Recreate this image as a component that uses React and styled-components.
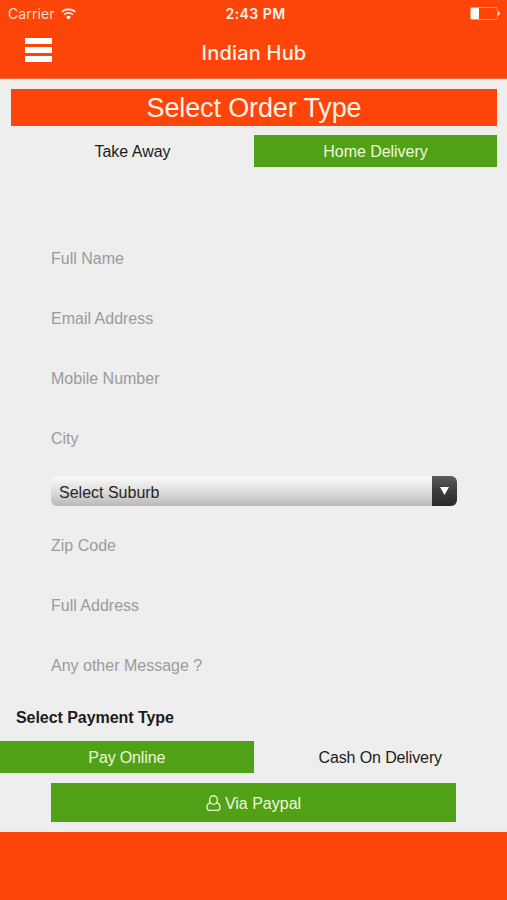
import React from 'react';
import styled, { createGlobalStyle } from 'styled-components';

const orange = '#fd4509';
const green = '#50a116';

const GlobalStyle = createGlobalStyle`
  * {
    box-sizing: border-box;
  }

  body {
    margin: 0;
    background: #eeeeee;
    font-family: "Liberation Sans", Arial, sans-serif;
    font-size: 16px;
    color: #1c1c1c;
  }
`;

const Screen = styled.div`
  display: flex;
  flex-direction: column;
  height: 900px;
  background: #eeeeee;
`;

const Header = styled.header`
  height: 79px;
  background: ${orange};
  border-bottom: 1px solid #fb6a3d;
  color: #fff1e8;
  font-family: Inter, "Liberation Sans", sans-serif;
`;

const StatusBar = styled.div`
  display: grid;
  grid-template-columns: 1fr auto 1fr;
  align-items: center;
  height: 27px;
  padding: 0 7px 0 8px;
  font-size: 14px;
`;

const Carrier = styled.div`
  display: flex;
  align-items: center;
  gap: 6px;
  letter-spacing: 0.1px;
  color: #ffd9c8;
`;

const Clock = styled.div`
  padding-left: 3px;
  font-weight: 600;
  letter-spacing: 0.45px;
`;

const Battery = styled.svg`
  justify-self: end;
`;

const NavBar = styled.div`
  display: grid;
  grid-template-columns: 1fr auto 1fr;
  align-items: center;
  height: 51px;
  padding: 0 24px 0 25px;
`;

const MenuButton = styled.button`
  display: flex;
  flex-direction: column;
  gap: 3px;
  width: 27px;
  margin-top: -5px;
  padding: 0;
  border: 0;
  background: none;
`;

const MenuLine = styled.span`
  height: 6px;
  background: #fff;
`;

const NavTitle = styled.h1`
  margin: 0;
  font-size: 20px;
  font-weight: 500;
  letter-spacing: 0.2px;
`;

const Banner = styled.h2`
  height: 37px;
  margin: 10px 10px 9px 11px;
  background: ${orange};
  color: #fff1e8;
  font-size: 27px;
  font-weight: 400;
  line-height: 39px;
  letter-spacing: -0.13px;
  text-align: center;
`;

const Options = styled.div`
  display: grid;
  grid-template-columns: 1fr 1fr;
  height: 32px;
  margin: ${props => props.margin};
`;

const Option = styled.button`
  padding: 2px 0 0;
  border: 0;
  background: ${props => (props.active ? green : 'transparent')};
  color: ${props => (props.active ? '#f0f8df' : '#1c1c1c')};
  font-family: inherit;
  font-size: 16px;
  letter-spacing: ${props => props.spacing || '0'};
`;

const Form = styled.form`
  display: flex;
  flex-direction: column;
  padding: 62px 50px 0 51px;
`;

const Field = styled.label`
  height: 60px;
  line-height: 60px;
  color: #9b9b9b;
`;

const Select = styled.div`
  display: flex;
  height: 30px;
  margin: 7px 0 10px;
  border-radius: 6px;
  overflow: hidden;
`;

const SelectValue = styled.div`
  flex: 1;
  padding-left: 8px;
  background: linear-gradient(#fbfbfb, #dedede 50%, #b9b9b9);
  color: #262626;
  line-height: 33px;
`;

const SelectArrow = styled.div`
  display: flex;
  align-items: center;
  justify-content: center;
  width: 25px;
  background: linear-gradient(#5c5c5c, #3c3c3c 50%, #282828);
`;

const PaymentTitle = styled.h3`
  height: 45px;
  margin: 0 0 0 16px;
  font-size: 16px;
  line-height: 43px;
  letter-spacing: -0.05px;
`;

const PaypalButton = styled.button`
  display: flex;
  align-items: center;
  justify-content: center;
  gap: 4px;
  height: 39px;
  margin: 0 51px 10px;
  padding: 2px 0 0;
  border: 0;
  background: ${green};
  color: #f0f8df;
  font-family: inherit;
  font-size: 16px;
`;

const Footer = styled.footer`
  flex: 1;
  background: ${orange};
`;

const WifiIcon = () => (
  <svg width="15" height="12" viewBox="0 0 15 12" fill="none">
    <path d="M0.8 3.9a9.6 9.6 0 0 1 13.4 0" stroke="#ffeadf" strokeWidth="1.9" />
    <path d="M3.2 6.6a6.2 6.2 0 0 1 8.6 0" stroke="#ffeadf" strokeWidth="1.8" />
    <path d="M7.5 11.5L5.1 8.9a3.4 3.4 0 0 1 4.8 0z" fill="#fff" />
  </svg>
);

const BatteryIcon = () => (
  <Battery width="30" height="13" viewBox="0 0 30 13">
    <rect x="0.5" y="0.5" width="27" height="12" rx="1.5" fill="none" stroke="#ff946e" />
    <rect x="1" y="1" width="8" height="11" rx="1" fill="#fff" />
    <path d="M28 4.5a2 2 0 0 1 0 4z" fill="#ffe5d8" />
  </Battery>
);

const PersonIcon = () => (
  <svg width="15" height="17" viewBox="0 0 15 17" fill="none" stroke="#e3f1cb" strokeWidth="1.4">
    <ellipse cx="7.5" cy="5.1" rx="3.9" ry="4.3" />
    <path d="M4.4 7.8C2 8.3 1 10.1 1 12.2c0 2.1 1.1 3.2 3 3.2h7c1.9 0 3-1.1 3-3.2 0-2.1-1-3.9-3.4-4.4" />
  </svg>
);

const contactFields = ['Full Name', 'Email Address', 'Mobile Number', 'City'];
const addressFields = ['Zip Code', 'Full Address', 'Any other Message ?'];

const Fields = props => props.items.map(item => (
  <Field key={item}>{item}</Field>
));

const App = () => (
  <Screen>
    <GlobalStyle />
    <Header>
      <StatusBar>
        <Carrier>
          <span>Carrier</span>
          <WifiIcon />
        </Carrier>
        <Clock>2:43 PM</Clock>
        <BatteryIcon />
      </StatusBar>
      <NavBar>
        <MenuButton aria-label="Menu">
          <MenuLine />
          <MenuLine />
          <MenuLine />
        </MenuButton>
        <NavTitle>Indian Hub</NavTitle>
      </NavBar>
    </Header>
    <Banner>Select Order Type</Banner>
    <Options margin="0 10px 0 11px">
      <Option>Take Away</Option>
      <Option active spacing="-0.05px">Home Delivery</Option>
    </Options>
    <Form>
      <Fields items={contactFields} />
      <Select>
        <SelectValue>Select Suburb</SelectValue>
        <SelectArrow>
          <svg width="9" height="8" viewBox="0 0 9 8">
            <path d="M0 0h9L4.5 8z" fill="#fff" />
          </svg>
        </SelectArrow>
      </Select>
      <Fields items={addressFields} />
    </Form>
    <PaymentTitle>Select Payment Type</PaymentTitle>
    <Options margin="0 0 10px">
      <Option active spacing="-0.15px">Pay Online</Option>
      <Option spacing="-0.12px">Cash On Delivery</Option>
    </Options>
    <PaypalButton>
      <PersonIcon />
      Via Paypal
    </PaypalButton>
    <Footer />
  </Screen>
);

export default App;
